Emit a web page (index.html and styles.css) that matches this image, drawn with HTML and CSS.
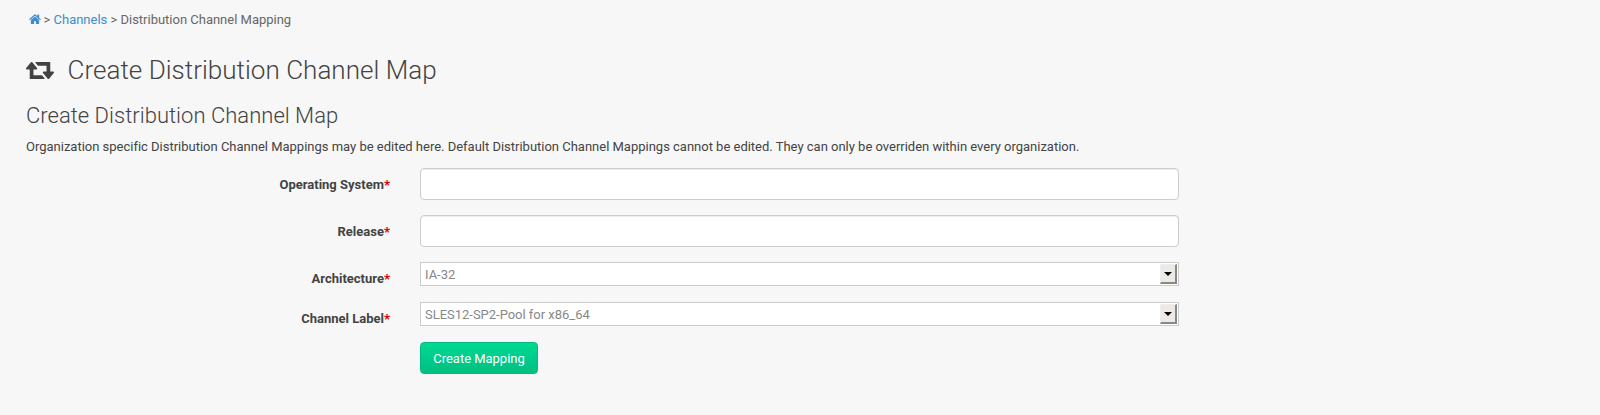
FILE: index.html
```html
<!DOCTYPE html>
<html lang="en">
<head>
<meta charset="utf-8">
<title>Create Distribution Channel Map</title>
<link rel="stylesheet" href="styles.css">
</head>
<body>
<nav class="breadcrumb"><svg class="home" viewBox="0 0 1664 1344" preserveAspectRatio="none"><path transform="translate(0 -96)" d="M1408 864v512q0 26-19 45t-45 19H960v-384H704v384H320q-26 0-45-19t-19-45V896q0-1 .5-3t.5-3l575-474 575 474q1 2 1 6zM1631 823l-62 74q-8 9-21 11h-3q-13 0-21-7L832 324l-692 577q-12 8-24 7-13-2-21-11l-62-74q-8-10-7-23.500t11-21.500l719-599q32-26 76-26t76 26l244 204V192q0-14 9-23t23-9h192q14 0 23 9t9 23v408l219 178q10 8 11 21.500t-7 23.500z"/></svg> &gt; <a>Channels</a> &gt; Distribution Channel Mapping</nav>
<h1><svg class="retweet" viewBox="0 128 1920 1152" preserveAspectRatio="none"><path d="M1280 1248q0 13-9.500 22.500t-22.500 9.500H288q-8 0-13.500-2t-9-7-5.500-8-3-11.500-1-11.500V640H64q-26 0-45-19T0 576q0-24 15-41l320-384q19-22 49-22t49 22l320 384q15 17 15 41 0 26-19 45t-45 19H512v384h576q16 0 25 11l160 192q7 10 7 21zm640-416q0 24-15 41l-320 384q-20 23-49 23t-49-23l-320-384q-15-17-15-41 0-26 19-45t45-19h192V384H832q-16 0-25-12L647 180q-7-9-7-20 0-13 9.500-22.500T672 128h960q8 0 13.500 2t9 7 5.500 8 3 11.500 1 11.500v600h192q26 0 45 19t19 45z"/></svg><span>Create Distribution Channel Map</span></h1>
<h2>Create Distribution Channel Map</h2>
<p>Organization specific Distribution Channel Mappings may be edited here. Default Distribution Channel Mappings cannot be edited. They can only be overriden within every organization.</p>
<form>
<div class="row"><label>Operating System<b>*</b></label><input class="text" type="text"></div>
<div class="row"><label>Release<b>*</b></label><input class="text" type="text"></div>
<div class="row short"><label>Architecture<b>*</b></label><div class="select"><span>IA-32</span><i class="arrow"></i></div></div>
<div class="row short"><label>Channel Label<b>*</b></label><div class="select"><span>SLES12-SP2-Pool for x86_64</span><i class="arrow"></i></div></div>
<button type="button">Create Mapping</button>
</form>
</body>
</html>
```
FILE: styles.css
```css
* { box-sizing: border-box; }
body { margin: 0; padding: 10px 26px; background: #f7f7f7; color: #434343; font: 13px/20px Roboto, sans-serif; }
.breadcrumb { padding-left: 3px; height: 20px; color: #666; white-space: nowrap; letter-spacing: -.01px; }
.breadcrumb a { color: #428bca; }
.home { width: 12px; height: 10px; margin-right: -.7px; fill: #428bca; vertical-align: 0; }
h1, h2 { margin: 0; font-weight: 300; }
h1 { display: flex; align-items: center; height: 30px; margin-top: 25px; font-size: 26px; line-height: 30px; letter-spacing: .03px; }
.retweet { width: 28px; height: 17px; margin: 1px 13.500px 0 0; fill: #434343; }
h2 { margin-top: 19px; font-size: 22px; line-height: 24px; letter-spacing: .02px; }
p { margin: 9px 0 11px; letter-spacing: -.008px; }
.row { display: flex; height: 32px; margin-bottom: 15px; }
.row label { width: 394px; padding: 7px 30px 0 0; text-align: right; font-weight: 700; flex: none; }
label b { color: #d00; }
.text { width: 759px; height: 32px; border: 1px solid #ccc; border-radius: 4px; background: #fff; box-shadow: inset 0 1px 1px rgba(0,0,0,.075); }
.short { height: 24px; margin-bottom: 16px; }
.select { display: flex; justify-content: space-between; width: 759px; height: 24px; padding: 1px 1px 1px 4px; border: 1px solid #ccc; background: #fff; color: #888; }
.select span { padding-top: 1px; letter-spacing: -.02px; }
.arrow { display: flex; align-items: center; justify-content: center; width: 17px; background: #edeae6; border: 1px solid #eee; border-right: 2px solid #888; border-bottom: 2px solid #888; }
.arrow::after { content: ""; border: 4px solid transparent; border-top-color: #000; border-bottom: 0; }
button { display: block; width: 118px; height: 32px; margin-left: 394px; padding: 0; border: 1px solid #00b97c; border-radius: 4px; background: linear-gradient(#00d993, #00c081); color: #fff; font: 13px Roboto, sans-serif; letter-spacing: -.02px; }
```
